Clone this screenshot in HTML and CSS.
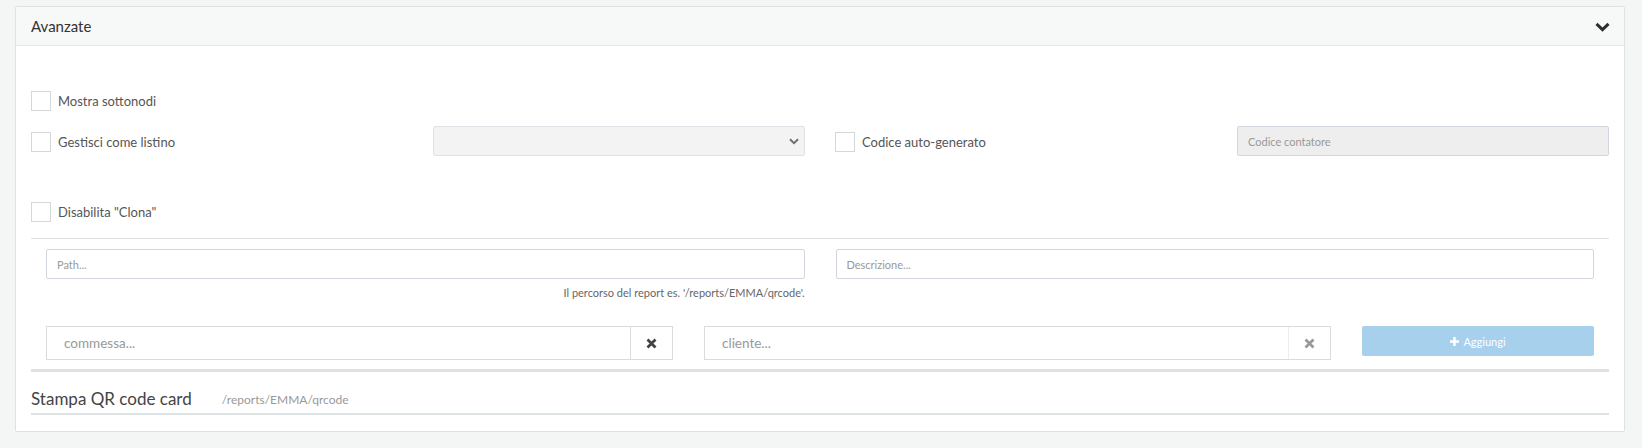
FILE: index.html
```html
<!DOCTYPE html>
<html lang="it">
<head>
<meta charset="utf-8">
<title>Avanzate</title>
<link rel="stylesheet" href="styles.css">
</head>
<body>
<div class="card">
  <div class="card-header">
    <span class="card-title">Avanzate</span>
    <svg class="chev" width="15" height="10" viewBox="0 0 15 10"><path d="M1.5 1.8 L7.5 7.6 L13.5 1.8" fill="none" stroke="#2f2f2f" stroke-width="3"/></svg>
  </div>
  <div class="card-body">
    <div class="row-single first">
      <label class="check"><span class="box"></span><span class="lbl">Mostra sottonodi</span></label>
    </div>
    <div class="grid4">
      <label class="check cell-check"><span class="box"></span><span class="lbl">Gestisci come listino</span></label>
      <select class="sel" disabled><option></option></select>
      <label class="check cell-check"><span class="box"></span><span class="lbl">Codice auto-generato</span></label>
      <input class="inp inp-disabled" type="text" placeholder="Codice contatore" disabled>
    </div>
    <div class="row-single third">
      <label class="check"><span class="box"></span><span class="lbl">Disabilita "Clona"</span></label>
    </div>
    <hr class="sep">
    <div class="inner">
      <div class="grid2">
        <div class="field">
          <input class="inp" type="text" placeholder="Path...">
          <div class="hint">Il percorso del report es. '/reports/EMMA/qrcode'.</div>
        </div>
        <div class="field">
          <input class="inp" type="text" placeholder="Descrizione...">
        </div>
      </div>
      <div class="grid3">
        <div class="s2">
          <span class="s2-text">commessa...</span>
          <span class="s2-clear dark"><svg width="11" height="11" viewBox="0 0 11 11"><path d="M1.5 1.5 L9.5 9.5 M9.5 1.5 L1.5 9.5" stroke="currentColor" stroke-width="2.8"/></svg></span>
        </div>
        <div class="s2">
          <span class="s2-text">cliente...</span>
          <span class="s2-clear light"><svg width="11" height="11" viewBox="0 0 11 11"><path d="M1.5 1.5 L9.5 9.5 M9.5 1.5 L1.5 9.5" stroke="currentColor" stroke-width="2.8"/></svg></span>
        </div>
        <button class="btn-add" disabled><svg width="9" height="9" viewBox="0 0 9 9"><path d="M4.5 0 V9 M0 4.5 H9" stroke="#fff" stroke-width="2.4"/></svg><span>Aggiungi</span></button>
      </div>
    </div>
    <div class="thick"></div>
    <div class="report">
      <span class="report-name">Stampa QR code card</span>
      <span class="report-path">/reports/EMMA/qrcode</span>
    </div>
  </div>
</div>
</body>
</html>
```

FILE: styles.css
```css
html, body {
  margin: 0;
  padding: 0;
}
body {
  background: #f4f6f6;
  font-family: Lato, "Noto Sans", sans-serif;
  padding: 6px 17px 0 15px;
}
.card {
  background: #fff;
  border: 1px solid #dfe2e2;
  border-radius: 2px;
}
.card-header {
  height: 38px;
  background: #f7f8f8;
  border-bottom: 1px solid #e3e6e6;
  display: flex;
  align-items: center;
  justify-content: space-between;
  padding: 0 14px 0 15px;
}
.card-title {
  font-size: 15px;
  color: #333;
}
.chev {
  display: block;
  margin-top: 1px;
}
.card-body {
  padding: 15px 15px 16px;
}
.row-single {
  display: flex;
  align-items: center;
}
.row-single.first {
  margin-top: 30px;
}
.row-single.third {
  margin-top: 46px;
}
.check {
  display: flex;
  align-items: center;
  cursor: pointer;
}
.box {
  width: 18px;
  height: 18px;
  border: 1px solid #d5d8d8;
  background: #fff;
  flex: none;
}
.lbl {
  margin-left: 7px;
  font-size: 13px;
  color: #555;
}
.grid4 {
  margin-top: 15px;
  display: grid;
  grid-template-columns: repeat(4, 1fr);
  column-gap: 30px;
  align-items: start;
}
.cell-check {
  margin-top: 6px;
}
.sel {
  appearance: none;
  -webkit-appearance: none;
  width: 100%;
  height: 30px;
  margin: 0;
  border: 1px solid #d2d6de;
  border-radius: 2px;
  background: #eeeeee url("data:image/svg+xml,%3Csvg xmlns='http://www.w3.org/2000/svg' width='10' height='7' viewBox='0 0 10 7'%3E%3Cpath d='M1 1.2 L5 5.2 L9 1.2' fill='none' stroke='%23333' stroke-width='2'/%3E%3C/svg%3E") no-repeat right 5px center;
}
.inp {
  display: block;
  box-sizing: border-box;
  width: 100%;
  height: 30px;
  margin: 0;
  border: 1px solid #d2d6de;
  border-radius: 2px;
  padding: 0 10px;
  font-family: Lato, "Noto Sans", sans-serif;
  font-size: 11px;
  color: #555;
  background: #fff;
}
.inp::placeholder {
  color: #999;
}
.inp-disabled {
  background: #eeeeee;
}
.sep {
  margin: 16px 0 0;
  border: 0;
  border-top: 1px solid #e0e3e3;
  height: 0;
}
.inner {
  padding: 10px 15px 0;
}
.grid2 {
  display: grid;
  grid-template-columns: 1fr 1fr;
  column-gap: 31px;
}
.hint {
  margin-top: 6px;
  text-align: right;
  font-size: 11px;
  line-height: 16px;
  color: #666;
}
.grid3 {
  margin-top: 25px;
  display: grid;
  grid-template-columns: 1fr 1fr 232px;
  column-gap: 31px;
  align-items: start;
}
.s2 {
  height: 34px;
  box-sizing: border-box;
  border: 1px solid #d8dcdc;
  display: flex;
  align-items: stretch;
}
.s2-text {
  flex: 1;
  display: flex;
  align-items: center;
  padding-left: 17px;
  font-size: 13.5px;
  color: #999;
}
.s2-clear {
  width: 41px;
  border-left: 1px solid #d8dcdc;
  display: flex;
  align-items: center;
  justify-content: center;
}
.s2-clear.dark {
  color: #444;
}
.s2-clear.light {
  color: #9a9a9a;
  border-left-color: #eceeee;
}
.btn-add {
  height: 30px;
  border: 0;
  border-radius: 2px;
  background: #a6d0ec;
  color: #fff;
  font-family: Lato, "Noto Sans", sans-serif;
  font-size: 11px;
  display: flex;
  align-items: center;
  justify-content: center;
  gap: 4px;
  padding: 0;
}
.thick {
  margin-top: 9px;
  height: 3px;
  background: #dde3e5;
}
.report {
  height: 43px;
  border-bottom: 2px solid #dde3e5;
  display: flex;
  align-items: flex-end;
  padding-bottom: 2px;
  box-sizing: border-box;
}
.report-name {
  font-size: 17px;
  color: #444;
  line-height: 24px;
}
.report-path {
  margin-left: 30px;
  font-size: 12px;
  color: #999;
  line-height: 22px;
}
```
